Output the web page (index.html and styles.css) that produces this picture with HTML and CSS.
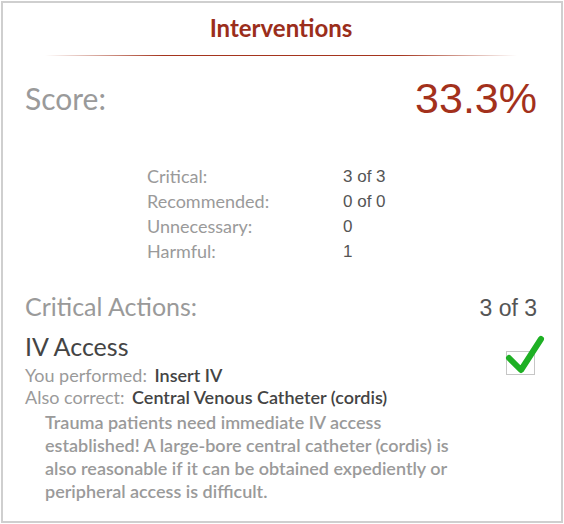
FILE: index.html
```html
<!DOCTYPE html>
<html lang="en">
<head>
  <meta charset="UTF-8" />
  <title>Interventions</title>
  <link rel="stylesheet" href="styles.css">
</head>
<body>
  <div class="card">
    <h2 class="title">Interventions</h2>
    <div class="rule"></div>

    <div class="score-row">
      <span class="score-label">Score:</span>
      <span class="score-value">33.3%</span>
    </div>

    <div class="stats">
      <span class="stat-label">Critical:</span><span class="stat-value">3 of 3</span>
      <span class="stat-label">Recommended:</span><span class="stat-value">0 of 0</span>
      <span class="stat-label">Unnecessary:</span><span class="stat-value">0</span>
      <span class="stat-label">Harmful:</span><span class="stat-value">1</span>
    </div>

    <div class="section-row">
      <span class="section-label">Critical Actions:</span>
      <span class="section-count">3 of 3</span>
    </div>

    <div class="action">
      <div class="action-head">
        <span class="action-name">IV Access</span>
        <span class="check">
          <svg width="44" height="46" viewBox="0 0 44 46">
            <path d="M4 26 L16 38 L36 7" fill="none" stroke="#1eb024" stroke-width="6" stroke-linecap="round" stroke-linejoin="round"/>
          </svg>
        </span>
      </div>
      <div class="detail">You performed: <b>Insert IV</b></div>
      <div class="detail">Also correct: <b>Central Venous Catheter (cordis)</b></div>
      <p class="note">Trauma patients need immediate IV access established! A large-bore central catheter (cordis) is also reasonable if it can be obtained expediently or peripheral access is difficult.</p>
    </div>
  </div>
</body>
</html>
```

FILE: styles.css
```css
body {
  margin: 1px;
  background: #fff;
  font-family: Lato, "Open Sans", sans-serif;
}

.card {
  height: 522px;
  box-sizing: border-box;
  border: 2px solid #cfcfcf;
  padding: 0 24px 0 22px;
}

.title {
  margin: 0;
  padding-top: 11px;
  text-align: center;
  font-size: 24px;
  font-weight: bold;
  color: #9b2e1b;
  line-height: 28px;
}

.rule {
  height: 1px;
  margin: 13px 20px 0 20px;
  background: linear-gradient(90deg, rgba(160,50,30,0), #a5351e 25%, #a5351e 75%, rgba(160,50,30,0));
}

.score-row {
  display: flex;
  justify-content: space-between;
  align-items: flex-start;
  margin-top: 19px;
}

.score-label {
  margin-top: 5px;
  font-size: 30px;
  line-height: 36px;
  color: #9a9a9a;
}

.score-value {
  font-family: "Liberation Sans", Arial, sans-serif;
  font-size: 43px;
  line-height: 46px;
  color: #a3311c;
}

.stats {
  display: grid;
  grid-template-columns: 196px auto;
  margin: 43px 0 0 122px;
  font-size: 18px;
  line-height: 25px;
}

.stat-label {
  color: #9a9a9a;
}

.stat-value {
  font-family: "Liberation Sans", Arial, sans-serif;
  font-size: 17px;
  color: #555;
}

.section-row {
  display: flex;
  justify-content: space-between;
  align-items: baseline;
  margin-top: 27px;
  line-height: 30px;
}

.section-label {
  font-size: 25px;
  color: #9a9a9a;
}

.section-count {
  font-family: "Liberation Sans", Arial, sans-serif;
  font-size: 23px;
  color: #555;
}

.action-head {
  display: flex;
  justify-content: space-between;
  align-items: flex-start;
  height: 30px;
  margin-top: 8px;
}

.action-name {
  font-size: 25px;
  line-height: 30px;
  color: #444;
}

.check {
  position: relative;
  width: 27px;
  height: 22px;
  margin: 20px 2px 0 0;
  border: 1px solid #c6c6c6;
}

.check svg {
  position: absolute;
  left: -2px;
  top: -20px;
}

.detail {
  margin-top: 3px;
  font-size: 18px;
  line-height: 22px;
  color: #9a9a9a;
}

.detail + .detail {
  margin-top: 0;
}

.detail b {
  font-weight: 600;
  color: #444;
  margin-left: 3px;
}

.note {
  margin: 3px 0 0 20px;
  width: 425px;
  font-size: 18px;
  line-height: 23px;
  font-weight: 600;
  color: #9a9a9a;
}
```
